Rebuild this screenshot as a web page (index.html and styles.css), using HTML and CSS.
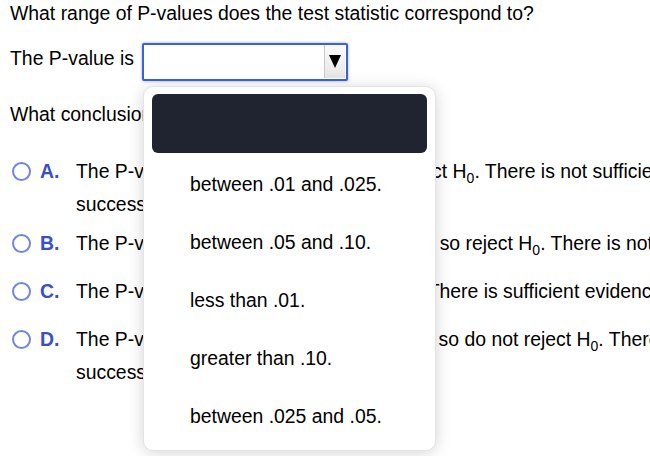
FILE: index.html
```html
<!DOCTYPE html>
<html lang="en">
<head>
<meta charset="utf-8">
<title>P-value question</title>
<link rel="stylesheet" href="styles.css">
</head>
<body>
<div class="page">
  <div class="title">What range of P-values does the test statistic correspond to?</div>
  <div class="answer-row">
    <span class="label">The P-value is</span>
    <div class="select-wrap">
      <div class="select">
        <span class="select-btn"><span class="tri"></span></span>
      </div>
      <div class="menu">
        <div class="menu-head"></div>
        <div class="menu-item">between .01 and .025.</div>
        <div class="menu-item">between .05 and .10.</div>
        <div class="menu-item">less than .01.</div>
        <div class="menu-item">greater than .10.</div>
        <div class="menu-item">between .025 and .05.</div>
      </div>
    </div>
  </div>
  <div class="question">What conclusion can be drawn?</div>
  <div class="options">
    <div class="opt">
      <span class="radio"></span>
      <span class="letter">A.</span>
      <div class="text">
        <div class="ln tall">The P-value is more than α so do not reject H<sub>0</sub>. There is not sufficient evidence to support the claim that the</div>
        <div class="ln">success rate differs from 0.5.</div>
      </div>
    </div>
    <div class="opt">
      <span class="radio"></span>
      <span class="letter">B.</span>
      <div class="text">
        <div class="ln tall">The P-value is less than the given level α, so reject H<sub>0</sub>. There is not sufficient evidence to support the claim.</div>
      </div>
    </div>
    <div class="opt">
      <span class="radio"></span>
      <span class="letter">C.</span>
      <div class="text">
        <div class="ln tall">The P-value is lower than α so reject H<sub>0</sub>. There is sufficient evidence to support the claim.</div>
      </div>
    </div>
    <div class="opt">
      <span class="radio"></span>
      <span class="letter">D.</span>
      <div class="text">
        <div class="ln tall">The P-value is higher than the set level α, so do not reject H<sub>0</sub>. There is sufficient evidence to support the claim that the</div>
        <div class="ln">success rate differs from 0.5.</div>
      </div>
    </div>
  </div>
</div>
</body>
</html>
```
FILE: styles.css
```css
html, body {
  margin: 0;
  padding: 0;
  background: #ffffff;
  overflow: hidden;
}
body {
  font-family: "Liberation Sans", Arial, Helvetica, sans-serif;
  font-size: 19.4px;
  color: #000000;
}
.page {
  padding: 1px 0 0 10px;
  width: 640px;
  height: 455px;
}
.title {
  line-height: 24px;
  white-space: nowrap;
}
.answer-row {
  display: flex;
  align-items: flex-start;
  margin-top: 18px;
}
.label {
  line-height: 24px;
  margin-top: 3px;
  margin-right: 8px;
  white-space: nowrap;
}
.select-wrap {
  position: relative;
  width: 206px;
  height: 38px;
  flex: none;
}
.select {
  box-sizing: border-box;
  width: 206px;
  height: 38px;
  border: 2px solid #3b62d6;
  border-radius: 2px;
  box-shadow: 0 0 3px rgba(59, 98, 214, 0.55);
  background: #ffffff;
  display: flex;
  justify-content: flex-end;
  align-items: flex-start;
  padding: 0 1px 0 0;
}
.select-btn {
  box-sizing: border-box;
  width: 21px;
  height: 33px;
  border-left: 1px solid #c9c9c9;
  background: linear-gradient(#fbfbfb, #e6e6e6);
  display: flex;
  align-items: center;
  justify-content: center;
}
.tri {
  width: 0;
  height: 0;
  border-left: 6px solid transparent;
  border-right: 6px solid transparent;
  border-top: 13px solid #000000;
}
.menu {
  position: absolute;
  top: 43px;
  left: 1px;
  width: 293px;
  height: 365px;
  box-sizing: border-box;
  background: #ffffff;
  border: 1px solid #e4e4e4;
  border-radius: 10px;
  box-shadow: 0 2px 16px rgba(0, 0, 0, 0.17);
  padding: 7px 8px;
  z-index: 2;
}
.menu-head {
  height: 59px;
  border-radius: 6px;
  background: #1f2430;
  margin-bottom: 2px;
}
.menu-item {
  height: 58px;
  line-height: 58px;
  padding-left: 38px;
  white-space: nowrap;
}
.question {
  line-height: 24px;
  margin-top: 21px;
  white-space: nowrap;
}
.options {
  margin-top: 33px;
}
.opt {
  display: flex;
  align-items: flex-start;
  margin-bottom: 15px;
}
.radio {
  flex: none;
  box-sizing: border-box;
  width: 19px;
  height: 19px;
  border: 2px solid #7286de;
  border-radius: 50%;
  margin: 3px 0 0 2px;
  background: #ffffff;
}
.letter {
  flex: none;
  width: 36px;
  margin-left: 9px;
  line-height: 24px;
  font-weight: bold;
  color: #3a4ec5;
}
.text {
  white-space: nowrap;
}
.ln {
  line-height: 24px;
}
.ln.tall {
  padding-bottom: 9px;
}
sub {
  font-size: 14px;
  line-height: 0;
  vertical-align: -5px;
}
```
